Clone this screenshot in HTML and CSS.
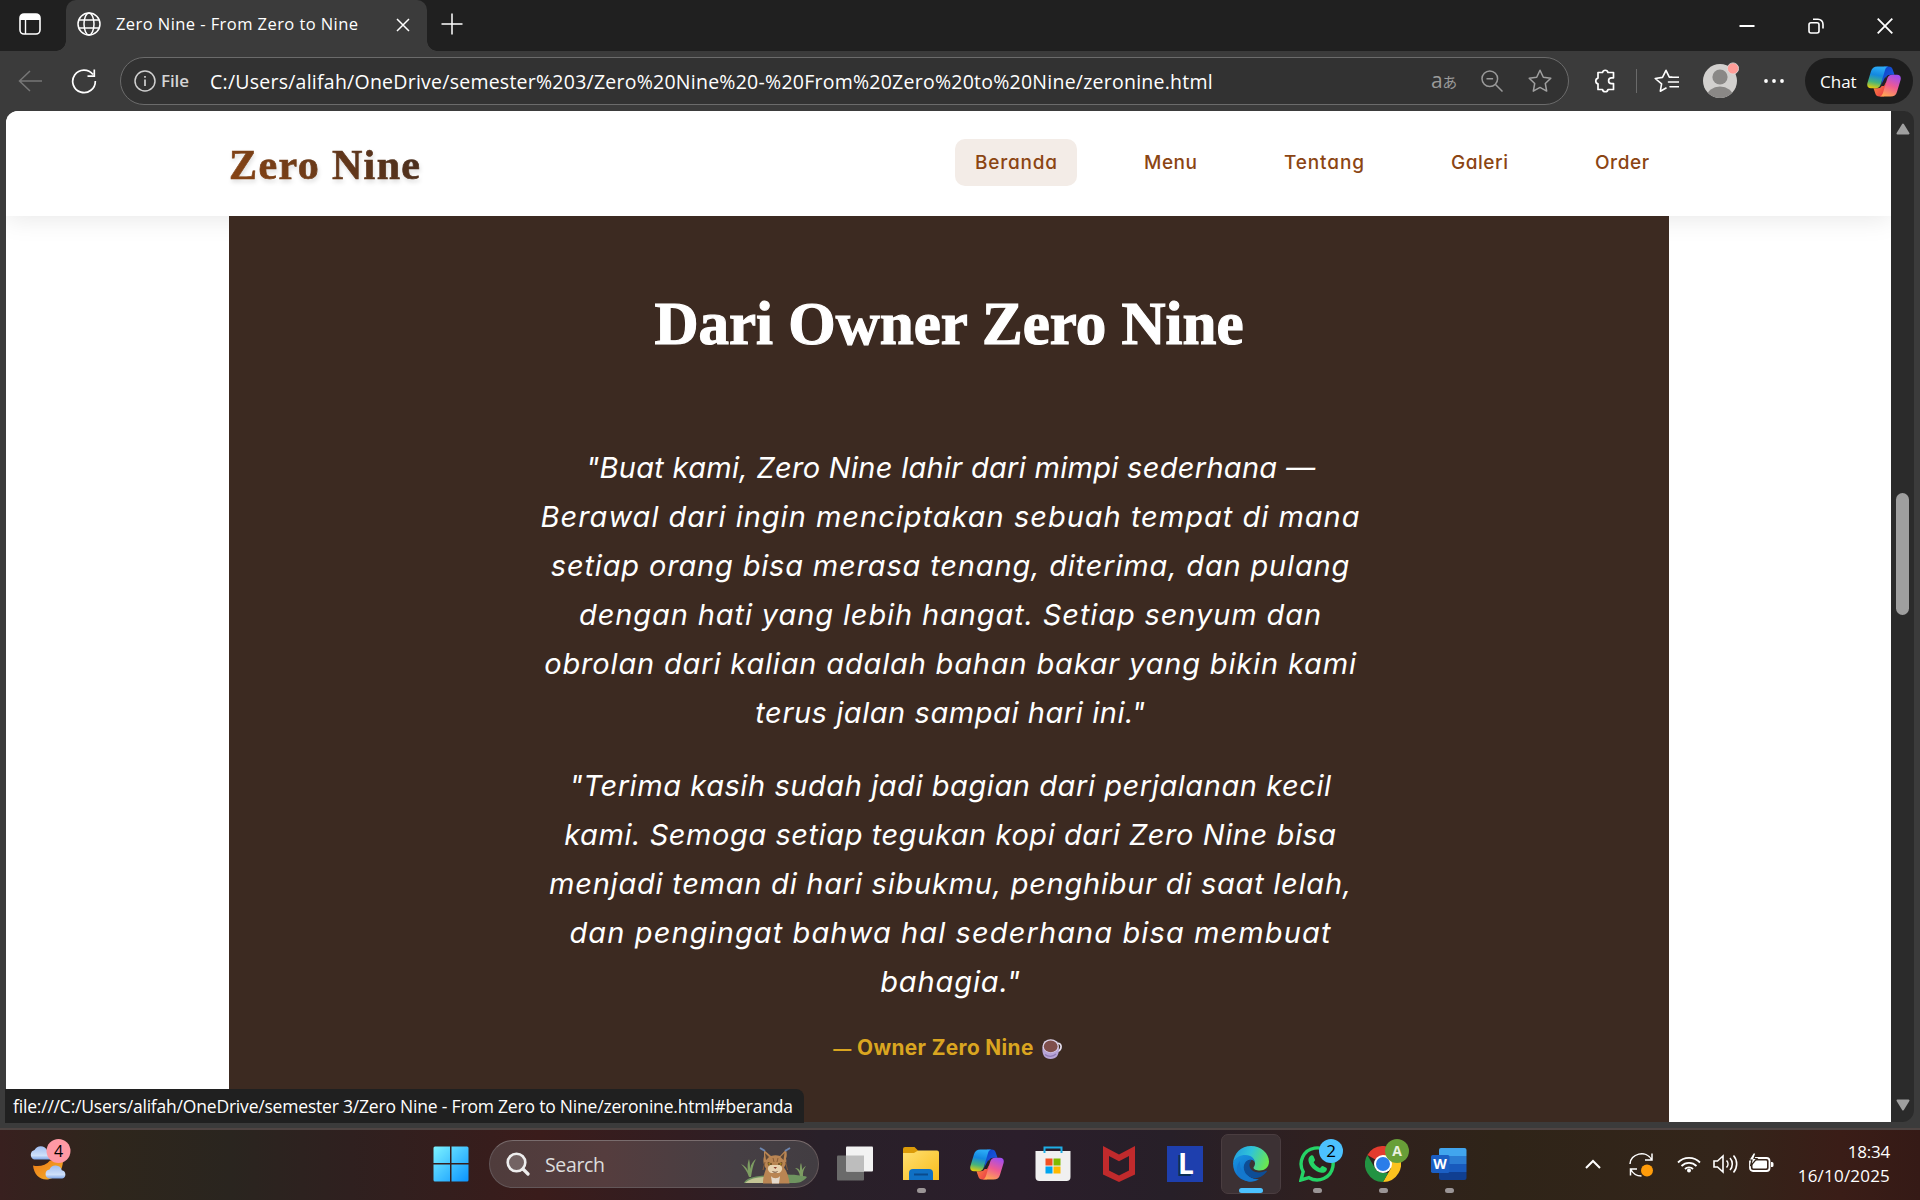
FILE: index.html
```html
<!DOCTYPE html>
<html lang="id">
<head>
<meta charset="utf-8">
<title>Zero Nine - From Zero to Nine</title>
<link rel="stylesheet" href="styles.css">
</head>
<body>
<svg class="defs" width="0" height="0" aria-hidden="true">
  <defs>
    <linearGradient id="cpBlue" x1="0.3" y1="0" x2="0.1" y2="1"><stop offset="0" stop-color="#2aa9f5"/><stop offset=".35" stop-color="#1488e0"/><stop offset=".68" stop-color="#46b37c"/><stop offset="1" stop-color="#f5d000"/></linearGradient>
    <linearGradient id="cpDark" x1="0" y1="0" x2="1" y2="1"><stop offset="0" stop-color="#0f3fc4"/><stop offset="1" stop-color="#1b64ea"/></linearGradient>
    <linearGradient id="cpPink" x1="0.7" y1="0" x2="0.3" y2="1"><stop offset="0" stop-color="#a24df0"/><stop offset=".5" stop-color="#ee5a92"/><stop offset="1" stop-color="#ffa552"/></linearGradient>
    <linearGradient id="cpRed" x1="0" y1="0" x2="1" y2="1"><stop offset="0" stop-color="#ff9a3c"/><stop offset="1" stop-color="#e8304a"/></linearGradient>
    <symbol id="copilot" viewBox="0 0 34 31">
      <path d="M17 0.5h4.500c2.500 0 3.600 1 4.200 3l1.800 5.200h-4c-2.800 0-4.300 1.500-5.200 4.300L14 20z" fill="url(#cpDark)"/>
      <path d="M17 30.500h-4.500c-2.500 0-3.600-1-4.200-3L6.500 22.300h4c2.800 0 4.300-1.500 5.200-4.300L20 11z" fill="url(#cpRed)"/>
      <path d="M18 11.500h3.500l-4.500 8.500h-3.500z" fill="#262026"/>
      <path d="M10.500 0.500h10.800c-1.800.3-2.700 1.600-3.400 3.900l-4 13.700c-.9 2.900-2.400 4.200-5.300 4.200H4C.8 22.300-.4 20 .5 16.800L4 5.300C4.900 2 7 .5 10.500.5z" fill="url(#cpBlue)"/>
      <path d="M23.500 30.500H12.700c1.800-.3 2.700-1.600 3.400-3.900l4-13.700c.9-2.900 2.400-4.200 5.300-4.200H30c3.200 0 4.400 2.300 3.500 5.500L30 25.700c-.9 3.300-3 4.800-6.500 4.800z" fill="url(#cpPink)"/>
    </symbol>
    <linearGradient id="win" x1="0" y1="0" x2="1" y2="1"><stop offset="0" stop-color="#7df3ff"/><stop offset="1" stop-color="#0a94ff"/></linearGradient>
    <linearGradient id="cloud" x1="0" y1="0" x2="0" y2="1"><stop offset="0" stop-color="#9fbdf0"/><stop offset=".7" stop-color="#cfe0fa"/><stop offset="1" stop-color="#7ea6e8"/></linearGradient>
    <linearGradient id="moon" x1="0" y1="0" x2="1" y2="1"><stop offset="0" stop-color="#ee7a16"/><stop offset="1" stop-color="#f3b32c"/></linearGradient>
    <linearGradient id="folder" x1="0" y1="0" x2="1" y2="1"><stop offset="0" stop-color="#ffdf70"/><stop offset="1" stop-color="#f9bd1c"/></linearGradient>
    <linearGradient id="edgeTop" x1="0" y1="0.300" x2="1" y2="0.600"><stop offset="0" stop-color="#229fe0"/><stop offset=".45" stop-color="#30c4d8"/><stop offset="1" stop-color="#6be84c"/></linearGradient>
    <linearGradient id="edgeLeft" x1="0" y1="0" x2="0.600" y2="1"><stop offset="0" stop-color="#1896e2"/><stop offset="1" stop-color="#0f68c4"/></linearGradient>
  </defs>
</svg>

<header class="tabstrip">
  <svg class="ic-tabs" viewBox="0 0 22 22" width="22" height="22"><rect x="1" y="1" width="20" height="20" rx="4" fill="none" stroke="#fff" stroke-width="1.600"/><path d="M1 7V5a4 4 0 0 1 4-4h12a4 4 0 0 1 4 4v2z" fill="#fff"/><path d="M6.500 7v14" stroke="#fff" stroke-width="1.400"/></svg>
  <div class="tab">
    <svg viewBox="0 0 24 24" width="24" height="24" fill="none" stroke="#fff" stroke-width="1.500"><circle cx="12" cy="12" r="11"/><ellipse cx="12" cy="12" rx="5" ry="11"/><path d="M2 8h20M2 16h20"/></svg>
    <span class="tab-title">Zero Nine - From Zero to Nine</span>
    <svg class="tab-close" viewBox="0 0 14 14" width="14" height="14" stroke="#fff" stroke-width="1.500"><path d="M1 1l12 12M13 1L1 13"/></svg>
  </div>
  <svg class="ic-plus" viewBox="0 0 22 22" width="22" height="22" stroke="#fff" stroke-width="1.500"><path d="M11 0.500v21M0.500 11h21"/></svg>
  <div class="window-controls">
    <svg viewBox="0 0 16 16" width="16" height="16"><path d="M.5 8h15" stroke="#fff" stroke-width="2"/></svg>
    <svg viewBox="0 0 16 16" width="16" height="16" fill="none" stroke="#fff" stroke-width="1.600"><rect x="1" y="4.800" width="10" height="10.200" rx="2"/><path d="M5 1.200h5a5 5 0 0 1 5 5v4.300"/></svg>
    <svg viewBox="0 0 16 16" width="16" height="16" stroke="#fff" stroke-width="1.800"><path d="M.7.7l14.600 14.600M15.300.7L.7 15.300"/></svg>
  </div>
</header>

<div class="toolbar">
  <svg class="ic-back" viewBox="0 0 24 22" width="24" height="22" fill="none" stroke="#777" stroke-width="1.500"><path d="M12 1L1.500 11 12 21M1.500 11H24"/></svg>
  <svg class="ic-reload" viewBox="0 0 26 26" width="26" height="26" fill="none" stroke="#fff" stroke-width="1.700"><path d="M22 6.500A11.300 11.300 0 1 0 24.300 13M23.300 1.500v6.700h-6.800"/></svg>
  <div class="address">
    <svg viewBox="0 0 22 22" width="22" height="22" fill="none" stroke="#d0d0d0" stroke-width="1.500"><circle cx="11" cy="11" r="10"/><path d="M11 9.500V16M11 6v1.800" stroke-width="1.700"/></svg>
    <span class="scheme">File</span>
    <span class="url">C:/Users/alifah/OneDrive/semester%203/Zero%20Nine%20-%20From%20Zero%20to%20Nine/zeronine.html</span>
    <span class="translate">a<small>あ</small></span>
    <svg class="ic-zoom" viewBox="0 0 22 22" width="22" height="22" fill="none" stroke="#9a9a9a" stroke-width="1.500"><circle cx="8.800" cy="8.800" r="7.800"/><path d="M14.500 14.500l7 7M5.500 8.800h6.600"/></svg>
    <svg class="ic-star" viewBox="0 0 24 24" width="24" height="24" fill="none" stroke="#a0a0a0" stroke-width="1.500" stroke-linejoin="round"><path d="M12 1.300l3.300 6.900 7.500 1-5.500 5.300 1.400 7.600-6.700-3.700-6.700 3.700 1.400-7.600L1.200 9.200l7.500-1z"/></svg>
  </div>
  <svg class="ic-ext" viewBox="0 0 22 24" width="22" height="24" fill="none" stroke="#fff" stroke-width="1.700" stroke-linejoin="round"><path d="M5 3.500h4.500a2.800 2.800 0 0 1 5.500 0h5.500v5.300h-2a2.900 2.900 0 0 0 0 5.800h2v5.900h-5.500a2.800 2.800 0 0 1-5.500 0H5v-5.600a3 3 0 0 1 0-5.800z"/></svg>
  <span class="divider"></span>
  <svg class="ic-fav" viewBox="0 0 25 24" width="25" height="24" fill="none" stroke="#fff" stroke-width="1.600" stroke-linejoin="round"><path d="M12.500 18.800L6.300 22.200l1.300-7.400L1.200 9.500l7.300-1.100L12 1.300l3.300 6.900h3"/><path d="M16 8.300h8.500M14.500 13h10M16 17.800h8.500" stroke-linecap="round"/></svg>
  <svg class="ic-avatar" viewBox="0 0 36 36" width="36" height="36"><defs><clipPath id="av"><circle cx="17" cy="19" r="17"/></clipPath></defs><circle cx="17" cy="19" r="17" fill="#d2d0ce"/><g clip-path="url(#av)" fill="#8a8886"><circle cx="17" cy="15" r="7.600"/><ellipse cx="17" cy="34.500" rx="13" ry="10"/></g><circle cx="30" cy="6.500" r="5.600" fill="#ff9d98" stroke="#ddd" stroke-width=".8"/></svg>
  <svg class="ic-dots" viewBox="0 0 22 6" width="22" height="6" fill="#fff"><circle cx="3" cy="3" r="1.900"/><circle cx="11" cy="3" r="1.900"/><circle cx="19" cy="3" r="1.900"/></svg>
  <div class="chat"><span>Chat</span><svg width="34" height="31"><use href="#copilot"/></svg></div>
</div>

<main class="viewport">
  <div class="page">
    <nav class="navbar">
      <div class="brand">Zero Nine</div>
      <ul class="links">
        <li class="link active link-beranda">Beranda</li>
        <li class="link link-menu">Menu</li>
        <li class="link link-tentang">Tentang</li>
        <li class="link link-galeri">Galeri</li>
        <li class="link link-order">Order</li>
      </ul>
    </nav>
    <section class="owner">
      <h2 class="owner-title">Dari Owner Zero Nine</h2>
      <p class="quote">
        <span class="line ls-a">"Buat kami, Zero Nine lahir dari mimpi sederhana —</span>
        <span class="line ls-b">Berawal dari ingin menciptakan sebuah tempat di mana</span>
        <span class="line ls-c">setiap orang bisa merasa tenang, diterima, dan pulang</span>
        <span class="line ls-d">dengan hati yang lebih hangat. Setiap senyum dan</span>
        <span class="line ls-c">obrolan dari kalian adalah bahan bakar yang bikin kami</span>
        <span class="line ls-e">terus jalan sampai hari ini."</span>
      </p>
      <p class="quote">
        <span class="line ls-e">"Terima kasih sudah jadi bagian dari perjalanan kecil</span>
        <span class="line ls-e">kami. Semoga setiap tegukan kopi dari Zero Nine bisa</span>
        <span class="line ls-f">menjadi teman di hari sibukmu, penghibur di saat lelah,</span>
        <span class="line ls-g">dan pengingat bahwa hal sederhana bisa membuat</span>
        <span class="line ls-d">bahagia."</span>
      </p>
      <p class="author"><span><span class="dash">—</span> Owner Zero Nine</span>
        <svg viewBox="0 0 20 20" width="20" height="20"><path d="M15 4.500c5-1.500 5.500 6 .8 8" fill="none" stroke="#e3dcec" stroke-width="1.700"/><path d="M.5 7.500C-.3 15 2 20 8.500 20s9-4.500 8.300-12.500z" fill="#b7a4d6"/><path d="M3 15.500c3 2.500 8 2.500 11-.5" fill="none" stroke="#8f7bb5" stroke-width="1.300"/><ellipse cx="8.700" cy="7" rx="8.200" ry="6.800" fill="#ddd3ea"/><ellipse cx="8.700" cy="7.400" rx="6.900" ry="5.800" fill="#7f4f4c"/></svg>
      </p>
    </section>
  </div>
  <div class="scrollbar">
    <svg viewBox="0 0 14 12" width="14" height="12"><path d="M7 1.500L12.500 10.500h-11z" fill="#a0a0a0" stroke="#a0a0a0" stroke-width="2" stroke-linejoin="round"/></svg>
    <span class="thumb"></span>
    <svg viewBox="0 0 14 12" width="14" height="12"><path d="M7 10.500L12.500 1.500h-11z" fill="#a0a0a0" stroke="#a0a0a0" stroke-width="2" stroke-linejoin="round"/></svg>
  </div>
  <div class="status">file:///C:/Users/alifah/OneDrive/semester 3/Zero Nine - From Zero to Nine/zeronine.html#beranda</div>
</main>

<footer class="taskbar">
  <div class="widget">
    <svg viewBox="0 0 44 44" width="44" height="44">
      <path d="M5 26.500c6 1.500 13 0 17-5h13c0 10-6 17-15 19-8 1-14-5-15-14z" fill="url(#moon)"/>
      <path d="M6 20.500a5 5 0 0 1 .5-9.500A7 7 0 0 1 19 11c4 0 5 2 5 9.500z" fill="url(#cloud)"/>
      <path d="M21 39.500a4.600 4.600 0 0 1 .5-9 6.500 6.500 0 0 1 12.300.8 4.200 4.200 0 0 1 .5 8.200z" fill="url(#cloud)"/>
      <circle cx="30.500" cy="12" r="12" fill="#ff99a4"/>
    </svg>
    <span class="badge-four">4</span>
  </div>
  <svg class="start" viewBox="0 0 36 36" width="36" height="36" fill="url(#win)"><path d="M2 .5h15v16.500H.5V2A1.500 1.500 0 0 1 2 .5zM18.500.5H34A1.500 1.500 0 0 1 35.500 2v15h-17zM.5 18.500H17v17H2A1.500 1.500 0 0 1 .5 34zM18.500 18.500h17V34a1.500 1.500 0 0 1-1.500 1.500H18.500z"/></svg>
  <div class="search">
    <svg viewBox="0 0 24 24" width="24" height="24" fill="none" stroke="#eee" stroke-width="2.600"><circle cx="10.500" cy="10.500" r="8.800" fill="#ffffff33"/><path d="M17 17l5 5" stroke-width="3.200" stroke-linecap="round"/></svg>
    <span>Search</span>
    <svg class="lynx" viewBox="0 0 68 38" width="68" height="38">
      <path d="M4 36c2-5 10-7 26-8 16-1 32 0 37 2-4 5-8 6-14 6H10z" fill="#6f9460"/>
      <path d="M5 36c4-4 12-6 20-6l2 6z" fill="#c5c596"/>
      <path d="M9 30C7 24 4 20 1 17c4 2 6 4 7 7-1-5 0-9 1-12 1 4 1 7 1 10 1-5 3-8 6-10-3 5-4 12-5 18zM60 29c-1-4-2-6-5-8 3 0 4 1 5 3 0-4 0-6 1-8 1 3 1 5 1 7 1-2 2-3 4-4-3 4-3 7-3 10z" fill="#7d9c62"/>
      <path d="M23 36.500c0-7 2-12 3-15-3-4-3-9-2-12V3l7 6c3-1 6-1 9 0l6-6.500c1 4 1 7 0 9 1 3 0 6-2 9 3 4 5 10 5.500 16z" fill="#b98553"/>
      <path d="M25 6l4 4-3 3zM44.500 6l-4 4 3 3z" fill="#5c4636"/>
      <path d="M30 18c-3 2-3 6 1 8h8c4-2 4-6 1-8z" fill="#e8d2b0"/>
      <path d="M31 29c2 3 7 3 9 0l-1 7.500h-7z" fill="#e4d9cb"/>
      <path d="M28 15.500l4 1.500-3.500 1.200zM42 15.500L38 17l3.500 1.200z" fill="#f0c01c" stroke="#4b321e" stroke-width=".7"/>
      <path d="M33.500 20h3.500l-1.700 2z" fill="#8c3f31"/><path d="M32.500 24.500c2 1 3.500 1 5 0" stroke="#6b4a37" fill="none"/>
      <path d="M25 15l-2 8M45.500 15l2 8M33 11l1 4M38 11l-1 4" stroke="#8a5c36" stroke-width="1"/>
      <path d="M25 4l-5-3M45 4l5-3" stroke="#6d86b0" stroke-width="2"/>
    </svg>
  </div>
  <div class="apps">
    <div class="app"><svg viewBox="0 0 36 36" width="36" height="36"><rect x="0" y="9.500" width="27" height="25" rx="1" fill="#6a6a6a"/><rect x="9" y=".5" width="27" height="25" rx="1" fill="#f2f2f2"/><path d="M9 9.500h18v16H10a1 1 0 0 1-1-1z" fill="#bdbdbd"/></svg></div>
    <div class="app run"><svg viewBox="0 0 36 36" width="36" height="36"><path d="M0 3a2 2 0 0 1 2-2h9.500l3.500 3.500L12 9H0z" fill="#dc9b08"/><path d="M0 7h11l4-2.500h19a2 2 0 0 1 2 2V34H0z" fill="url(#folder)"/><path d="M6 34v-7a4 4 0 0 1 4-4h16a4 4 0 0 1 4 4v7z" fill="#0f70c4"/><path d="M11 28.500h14" stroke="#0a4a8c" stroke-width="2"/></svg></div>
    <div class="app"><svg width="34" height="31"><use href="#copilot"/></svg></div>
    <div class="app"><svg viewBox="0 0 36 36" width="36" height="36"><path d="M.5 5h35v26a4 4 0 0 1-4 4h-27a4 4 0 0 1-4-4z" fill="#f0f0f0"/><path d="M9.500 7V1.500h17V7" fill="none" stroke="#1eaee6" stroke-width="2"/><path fill="#f25022" d="M10.500 12.500h7v7h-7z"/><path fill="#7fba00" d="M18.500 12.500h7v7h-7z"/><path fill="#00a4ef" d="M10.500 20.500h7v7h-7z"/><path fill="#ffb900" d="M18.500 20.500h7v7h-7z"/></svg></div>
    <div class="app"><svg viewBox="0 0 36 36" width="36" height="36"><path fill-rule="evenodd" d="M2 0l16 8.500L34 0v28.500L18 36 2 28.500zM8 10v14.500l10 5 10-5V10l-10 5.300z" fill="#c12a2c"/></svg></div>
    <div class="app"><span class="lapp">L</span></div>
    <div class="app active"><svg viewBox="0 0 36 36" width="36" height="36"><path d="M0 17C1 7 8 0 18 0s18 7.500 18 15.500c0 6-4.500 9-9 9-4 0-6.500-1.500-6.500-2.800 0-1 1.500-1.700 1.500-4.200 0-4-4-7.500-9-7.500C7 10 2 13 0 17z" fill="url(#edgeTop)"/><path d="M0 17c2-5.500 7-8 12.500-8 6 0 9.500 4 9.500 8 0-2-3-4-6-3-5 2-6 8-3 13 3 4.500 8 6.500 12 6-10 6-25 0-25-16z" fill="url(#edgeLeft)"/><path d="M14.500 14.500c-5 3-5 10 0 15 5 4 13 4 19-3.500 1-1-.2-1.500-1-1-7 3-15 1-16-5-.3-2 .5-4 2-5.500-1.500-.7-3-.6-4 0z" fill="#0d4d96"/><path d="M14.300 29.300C18 33 22 34 26 33c-4 3-10 4-15 1-8-4-9-13-4-19-1 6 2 11 7.300 14.300z" fill="#1478ce"/></svg></div>
    <div class="app run"><svg viewBox="0 0 36 36" width="36" height="36"><path d="M2 34l2.200-8.200A16 16 0 1 1 10 31.700z" fill="none" stroke="#25d366" stroke-width="3.400"/><path d="M12 9.500c1-.6 2-.3 2.400.6l1.500 3.400c.3.7 0 1.400-1.300 2.800 1.500 2.800 3.500 4.600 6.400 5.900 1.500-1.800 2-2.500 2.900-2.100l3.300 1.600c1 .5.8 1.700.3 2.800-.8 1.700-3 2.600-5 2.300C16 26 9.500 19.500 9.400 14c0-1.900 1.200-3.700 2.600-4.500z" fill="#25d366"/></svg><span class="badge two">2</span></div>
    <div class="app run"><svg viewBox="0 0 36 36" width="36" height="36"><path d="M18 18L2.400 9A18 18 0 0 1 33.600 9z" fill="#e33b2e"/><path d="M18 9h15.600A18 18 0 0 1 18 36l7.800-13.500z" fill="#fcc31e"/><path d="M2.400 9l7.800 13.500c2 3 5 4.500 7.800 4.500h5.200L18 36A18 18 0 0 1 2.400 9z" fill="#229342"/><circle cx="18" cy="18" r="9" fill="#fff"/><circle cx="18" cy="18" r="7" fill="#2b7de9"/></svg><span class="badge acct">A</span></div>
    <div class="app run"><svg viewBox="0 0 36 36" width="36" height="36"><path d="M8 4a2 2 0 0 1 2-2h23.500a2 2 0 0 1 2 2v6H8z" fill="#41a5ee"/><path d="M8 10h27.500v8H8z" fill="#2b7cd3"/><path d="M8 18h27.500v8H8z" fill="#185abd"/><path d="M8 26h27.500v6a2 2 0 0 1-2 2H10a2 2 0 0 1-2-2z" fill="#103f91"/><rect x="0" y="9" width="18.500" height="18" rx="1.700" fill="#1b5fc4"/></svg><span class="w">W</span></div>
  </div>
  <div class="tray">
    <svg class="t-chev" viewBox="0 0 16 10" width="16" height="10" fill="none" stroke="#fff" stroke-width="2"><path d="M1 9l7-7 7 7"/></svg>
    <svg class="t-sync" viewBox="0 0 25 25" width="25" height="25" fill="none" stroke="#fff" stroke-width="1.500"><path d="M1 12C1 2 17-3 23 8M23 1.500V8h-7M8 17H1.500v6.500M1.500 17c2 4 6 7 11 7"/><circle cx="18" cy="18.500" r="6" fill="#ff9c0a" stroke="none"/></svg>
    <svg class="t-wifi" viewBox="0 0 24 18" width="24" height="18" fill="none" stroke="#fff" stroke-width="1.800"><path d="M1 7.500a15.500 15.500 0 0 1 22 0M4.500 11a10.600 10.600 0 0 1 15 0M8 14a5.700 5.700 0 0 1 8 0"/><circle cx="12" cy="15.500" r="2" fill="#fff" stroke="none"/></svg>
    <svg class="t-vol" viewBox="0 0 25 20" width="25" height="20" fill="none" stroke="#fff" stroke-width="1.600"><path d="M1 7h3.500L10 2v16l-5.500-5H1zM13.500 6.500a5 5 0 0 1 0 7M17 4a9 9 0 0 1 0 12M20.500 1.500a13 13 0 0 1 0 17"/></svg>
    <svg class="t-bat" viewBox="0 0 25 20" width="25" height="20"><rect x="1" y="5" width="19.500" height="13" rx="3" fill="none" stroke="#fff" stroke-width="1.800"/><rect x="3.500" y="7.500" width="14.500" height="8" rx="1" fill="#fff"/><path d="M22 9h1a1.500 1.500 0 0 1 1.500 1.500v2A1.500 1.500 0 0 1 23 14h-1z" fill="#fff"/><path d="M4.500-.5L0 7h3L1.500 13 8 5.500H5L7 0z" fill="#fff" stroke="#33251a" stroke-width="1.200"/></svg>
    <div class="clock"><span class="time">18:34</span><span class="date">16/10/2025</span></div>
  </div>
</footer>
</body>
</html>
```
FILE: styles.css
```css
* { box-sizing: border-box; }
body {
  margin: 0;
  width: 1920px;
  height: 1200px;
  overflow: hidden;
  display: flex;
  flex-direction: column;
  background: #3b3b3b;
  color: #fff;
  font-family: "Open Sans", "Noto Sans", sans-serif;
  white-space: nowrap;
}
svg { display: block; flex: none; }
.defs { position: absolute; }

/* Tab strip */
.tabstrip {
  flex: none;
  height: 51px;
  background: #202020;
  display: flex;
  align-items: center;
}
.ic-tabs { margin: 0 0 4px 19px; }
.tab {
  position: relative;
  align-self: stretch;
  width: 361px;
  margin-left: 25px;
  padding: 0 0 3px 11px;
  background: #3b3b3b;
  border-radius: 10px 10px 0 0;
  display: flex;
  align-items: center;
}
.tab::before, .tab::after {
  content: "";
  position: absolute;
  bottom: 0;
  width: 10px;
  height: 10px;
}
.tab::before { left: -10px; background: radial-gradient(circle at 0 0, #202020 9.500px, #3b3b3b 10px); }
.tab::after { right: -10px; background: radial-gradient(circle at 100% 0, #202020 9.500px, #3b3b3b 10px); }
.tab-title { width: 280px; margin-left: 15px; padding-bottom: 2px; font-size: 16.500px; letter-spacing: 0.430px; }
.tab-close { margin-top: 2px; }
.ic-plus { margin: 0 0 4px 14px; }
.window-controls { margin-left: auto; margin-right: 27px; display: flex; gap: 53px; }

/* Toolbar */
.toolbar {
  flex: none;
  height: 60px;
  display: flex;
  align-items: center;
}
.ic-back { margin: 0 0 1px 18px; }
.ic-reload { margin-left: 29px; }
.address {
  width: 1449px;
  height: 48px;
  margin-left: 23px;
  padding: 0 13px 0 13px;
  border: 1.500px solid #6b6b6b;
  border-radius: 24px;
  background: #323232;
  display: flex;
  align-items: center;
}
.scheme { width: 49px; margin-left: 5px; padding-bottom: 1px; font-size: 17px; font-weight: 600; color: #d5d5d5; letter-spacing: -0.100px; }
.url { width: 1221px; font-size: 19.500px; letter-spacing: 0.243px; }
.translate { width: 26px; color: #9a9a9a; font-size: 21px; line-height: 26px; letter-spacing: -0.500px; margin-bottom: 3px; }
.translate small { font: 15px "Noto Sans CJK JP", sans-serif; line-height: 15px; }
.ic-zoom { margin-left: 24px; }
.ic-star { margin-left: 25px; }
.ic-ext { margin-left: 24px; }
.divider { width: 1px; height: 24px; margin-left: 21px; background: #6a6a6a; }
.ic-fav { margin-left: 17px; }
.ic-avatar { margin: 0 0 2px 24px; }
.ic-dots { margin-left: 24px; }
.chat {
  margin-left: 20px;
  width: 108px;
  height: 46px;
  border-radius: 23px;
  padding-left: 15px;
  background: #1d1d1d;
  display: flex;
  align-items: center;
  gap: 10px;
  font-size: 17px;
}

/* Page viewport */
.viewport { position: relative; flex: none; height: 1011px; margin: 0 6px; display: flex; }
.page {
  width: 1885px;
  background: #fff;
  border-radius: 12px 0 0 0;
  overflow: hidden;
}
.scrollbar {
  width: 23px;
  padding: 12px 0 11px;
  background: #2b2b2b;
  border-radius: 0 10px 12px 0;
  display: flex;
  flex-direction: column;
  align-items: center;
}
.thumb { width: 13px; height: 122px; margin: 358px 0 auto; border-radius: 7px; background: #9f9f9f; }
.status {
  position: absolute;
  z-index: 2;
  left: -1px;
  bottom: -1px;
  width: 799px;
  height: 34px;
  padding-left: 8px;
  background: #202020;
  border-radius: 0 8px 0 0;
  font-size: 17.500px;
  line-height: 34px;
  letter-spacing: -0.198px;
}

/* Site navigation */
.navbar {
  position: relative;
  z-index: 0;
  height: 105px;
  padding: 0 222px 0 223px;
  background: #fff;
  box-shadow: 0 2px 25px rgba(0, 0, 0, 0.100);
  display: flex;
  justify-content: space-between;
  align-items: flex-start;
}
.brand {
  padding-top: 29px;
  font: 700 42px/50px "Liberation Serif", serif;
  letter-spacing: 1.370px;
  background: linear-gradient(45deg, #8b4513, #3c2a21);
  background-clip: text;
  -webkit-background-clip: text;
  -webkit-text-fill-color: transparent;
  -webkit-text-stroke: 0.700px transparent;
  filter: drop-shadow(1px 3px 2px rgba(0, 0, 0, 0.120));
}
.links {
  margin: 28px 0 0;
  padding: 0;
  list-style: none;
  display: flex;
  gap: 47px;
  font: 500 19px/47px Inter, sans-serif;
  font-feature-settings: "cv11";
  color: #8b4513;
}
.link { height: 47px; padding-left: 20px; border-radius: 10px; }
.link.active { background: #f3ece7; }
.link-beranda { width: 122px; letter-spacing: 0.780px; }
.link-menu { width: 93px; letter-spacing: 0.550px; }
.link-tentang { width: 120px; letter-spacing: 0.870px; }
.link-galeri { width: 97px; letter-spacing: 0.540px; }
.link-order { width: 94px; letter-spacing: 0.550px; }

/* Owner message */
.owner {
  position: relative;
  z-index: 1;
  width: 1440px;
  height: 906px;
  margin: 0 0 0 223px;
  padding-top: 70px;
  background: #3c2a21;
  text-align: center;
}
.owner-title { margin: 0 0 81px; font: 700 61px/76px "Liberation Serif", serif; -webkit-text-stroke: 1.200px #fff; }
.quote {
  margin: 0 0 24px;
  padding-left: 3px;
  font: italic 400 29px/49px Inter, sans-serif;
  font-feature-settings: "cv11";
}
.line { display: block; }
.ls-a { letter-spacing: 0.290px; }
.ls-b { letter-spacing: 0.994px; }
.ls-c { letter-spacing: 0.828px; }
.ls-d { letter-spacing: 0.887px; }
.ls-e { letter-spacing: 0.568px; }
.ls-f { letter-spacing: 0.753px; }
.ls-g { letter-spacing: 1.100px; }
.author {
  margin: 0;
  display: flex;
  justify-content: center;
  align-items: center;
  gap: 8px;
  padding-right: 3px;
  font: 700 20.800px/36px Inter, sans-serif;
  letter-spacing: 0.370px;
  color: #daa520;
}
.dash { font-size: 18px; }

/* Taskbar */
.taskbar {
  flex: none;
  height: 72px;
  margin-top: 6px;
  padding-bottom: 2px;
  border-top: 2px solid #4f4442;
  background: linear-gradient(90deg, #38201f 0, #2e261c 110px, #2a251f 230px, #2f201f 350px, #3a1c1b 540px, #321d21 680px, #292029 820px, #2b1e2b 1020px, #271f28 1170px, #30201f 1330px, #2f2418 1500px, #33251a 1720px, #3a1d17 1840px, #351a16 1920px);
  display: flex;
  align-items: center;
}
.widget { position: relative; width: 405px; padding: 0 0 7px 28px; }
.badge-four { position: absolute; left: 46px; top: 0; width: 25px; text-align: center; font-size: 16px; line-height: 24px; color: #000; }
.start { margin-left: 28px; }
.search {
  width: 330px;
  height: 48px;
  margin-left: 20px;
  padding-left: 16px;
  border: 1px solid #635759;
  border-top-color: #796c6d;
  border-radius: 24px;
  background: linear-gradient(90deg, #4f3c3c, #553d3e 35%, #463f44 75%, #423d42);
  display: flex;
  align-items: center;
  font-size: 19.500px;
  letter-spacing: -0.350px;
  color: #ddd;
}
.search span { width: 195px; margin-left: 15px; }
.lynx { align-self: flex-start; margin-top: 6px; }
.apps { display: flex; gap: 6px; margin-left: 6px; }
.app { position: relative; width: 60px; height: 60px; border-radius: 7px; display: flex; align-items: center; justify-content: center; }
.app.active { background: #3c3134; border: 1px solid #4a3d40; }
.app.run::after, .app.active::after {
  content: "";
  position: absolute;
  bottom: 1px;
  left: 50%;
  width: 9px;
  height: 5px;
  margin-left: -4.500px;
  border-radius: 3px;
  background: #9b9596;
}
.app.active::after { bottom: 0; width: 24px; margin-left: -12px; background: #4cc2ff; }
.lapp { width: 36px; height: 36px; padding-left: 2px; background: #1e3fae; text-align: center; font: 700 28px/35px "Open Sans", sans-serif; text-shadow: -2px 2px 0 #0b2f55; }
.badge { position: absolute; left: 32px; top: 5px; width: 24px; height: 24px; border-radius: 50%; text-align: center; line-height: 24px; }
.two { background: #4cc2ff; color: #000; font-size: 17px; }
.acct { background: #689f38; color: #e8f0df; font-size: 14px; font-weight: 700; }
.w { position: absolute; left: 12px; top: 21px; width: 18px; text-align: center; font-size: 14px; line-height: 18px; font-weight: 700; }

.tray { flex: 1; display: flex; align-items: center; }
.t-chev { margin-left: 106px; }
.t-sync { margin-left: 28px; }
.t-wifi { margin-left: 23px; }
.t-vol { margin-left: 12px; }
.t-bat { margin: 0 0 3px 11px; }
.clock { margin-left: auto; margin-right: 30px; text-align: right; font-size: 17px; line-height: 24px; display: flex; flex-direction: column; }
.time { letter-spacing: -0.200px; }
.date { letter-spacing: 0.200px; }
```
